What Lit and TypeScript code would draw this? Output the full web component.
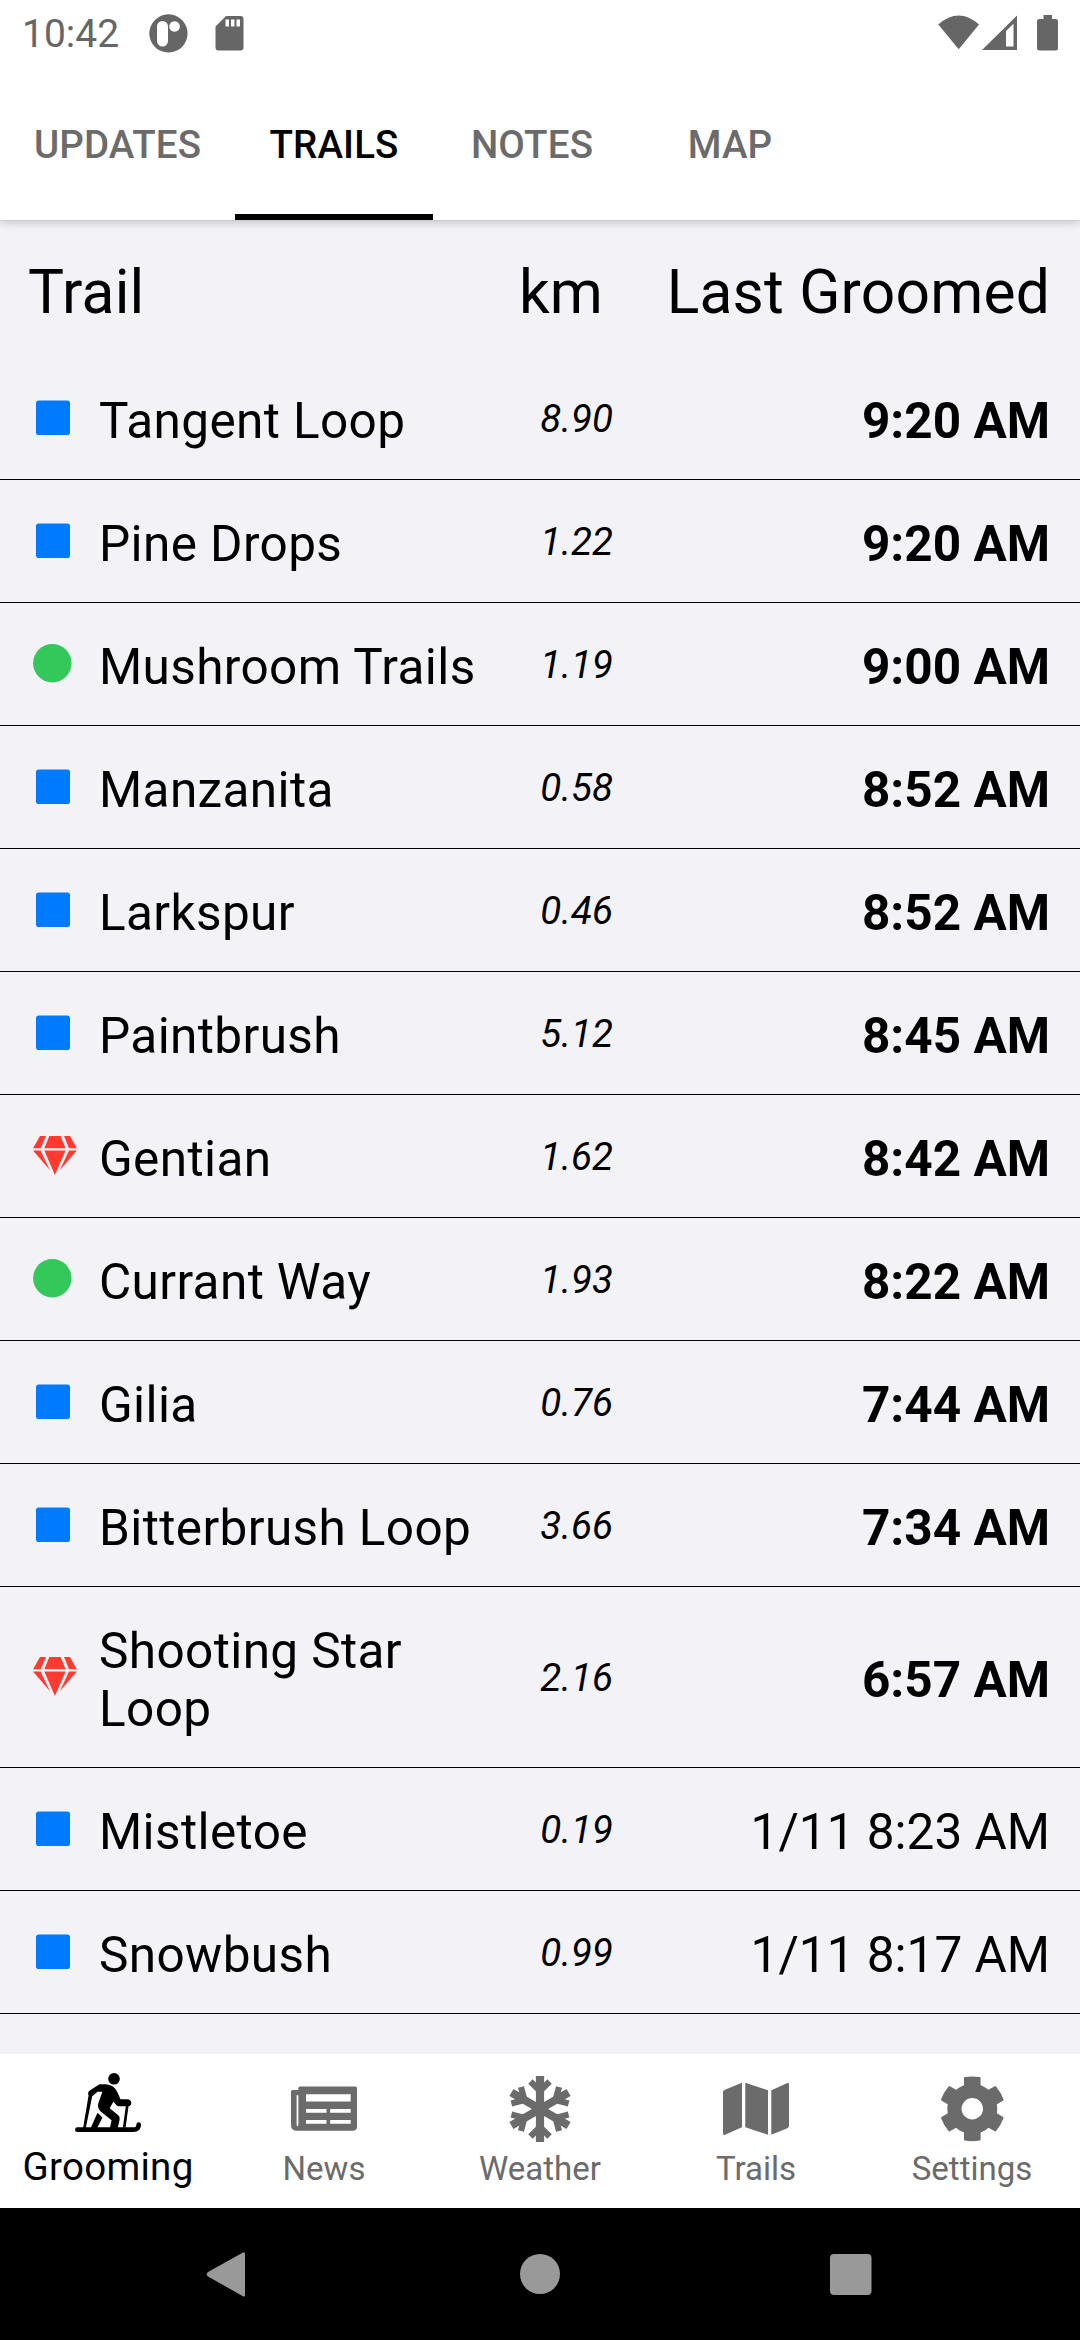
import { LitElement, html, css, svg } from "lit";
import { customElement, property } from "lit/decorators.js";
import { classMap } from "lit/directives/class-map.js";

type Level = "square" | "circle" | "gem";
interface Trail { name: string; km: string; time: string; level: Level; today: boolean; }

const t = (level: Level, name: string, km: string, time: string, today = true): Trail => ({ level, name, km, time, today });

const TRAILS: Trail[] = [
  t("square", "Tangent Loop", "8.90", "9:20 AM"),
  t("square", "Pine Drops", "1.22", "9:20 AM"),
  t("circle", "Mushroom Trails", "1.19", "9:00 AM"),
  t("square", "Manzanita", "0.58", "8:52 AM"),
  t("square", "Larkspur", "0.46", "8:52 AM"),
  t("square", "Paintbrush", "5.12", "8:45 AM"),
  t("gem", "Gentian", "1.62", "8:42 AM"),
  t("circle", "Currant Way", "1.93", "8:22 AM"),
  t("square", "Gilia", "0.76", "7:44 AM"),
  t("square", "Bitterbrush Loop", "3.66", "7:34 AM"),
  t("gem", "Shooting Star Loop", "2.16", "6:57 AM"),
  t("square", "Mistletoe", "0.19", "1/11 8:23 AM", false),
  t("square", "Snowbush", "0.99", "1/11 8:17 AM", false),
];

const LEVEL_ICONS = {
  square: svg`<rect x="3" y="2.5" width="34" height="34.5" rx="2.8" fill="#007aff"/>`,
  circle: svg`<circle cx="19.3" cy="19.2" r="19.2" fill="#34c759"/>`,
  gem: svg`<path fill="#ff3b30" d="M7 0H13L7.7 12.3H0ZM16.3 0H27.6L32.6 12.3H11.3ZM31 0H37L43.8 12.3H36ZM0 14.6H7.5L17 34.3ZM11.3 14.6H32.6L21.9 39ZM36 14.6H43.8L26.8 34.3Z"/>`,
};

const NAV_ICONS = {
  skier: svg`<g transform="translate(0 -2)">
    <circle cx="39" cy="4.8" r="5.8"/>
    <path d="M24.5 10.3C32 10 39 10 42.5 18.500L45.500 25.200H52C57.500 25.200 57.500 31.800 53.500 32.300L50.600 53.500H47.900L50.800 32.300H44.500C41.500 32.300 40.500 30 38.500 27.500L34.700 34.200L43.600 41.500C45 43 44.700 45 44.400 47L42.600 54H34.900L36.600 46.200L26 37.800C22.500 34.500 22.500 31 24 27.300L27.400 17.700L22.500 17.800L17.200 22.200L10.800 54H8.100L13.600 21.300C12.700 20 13 17.500 14.800 16.500Z"/>
    <path d="M22.500 38.700L27.400 43.500L22.200 54H15.700Z"/>
    <path d="M2.400 55.700H58.500C62 55.700 63.500 54.300 63.700 50.600" fill="none" stroke="currentColor" stroke-width="4.700" stroke-linecap="round"/></g>`,
  news: svg`<path transform="translate(0 -2)" fill-rule="evenodd" d="M9 12.500H64.500Q66 12.500 66 14V52.500Q66 56.800 61.500 56.800H6Q0 56.800 0 51V17.500Q0 16 1.500 16H7.300V14.200Q7.300 12.500 9 12.500ZM5.600 21.300V50.500Q5.600 52.200 6.500 52.200T7.400 50.500V21.300ZM15 20.200V27.500H59.700V20.200ZM15 35V38.700H35.500V35ZM39.200 35V38.700H59.700V35ZM15 46V49.700H35.500V46ZM39.200 46V49.700H59.700V46Z"/>`,
  snow: svg`<g transform="translate(33 33)" fill="none" stroke="currentColor" stroke-width="8.200">
      ${[0, 60, 120, 180, 240, 300].map((a) => svg`<g transform="rotate(${a})">
        <path d="M0 0V-33"/><path stroke-width="6.200" d="M-9.600 -27.500L0 -18L9.600 -27.500"/></g>`)}
    </g>`,
  map: svg`<path transform="translate(0 -1.700)" d="M19 8.500V53L2 60.400Q0 61.200 0 59V18Q0 16.200 1.800 15.500ZM22.300 8.500L45 16V60.500L22.300 53ZM48.300 16L64 9Q66 8.200 66 10V51.500Q66 53.200 64.300 54L48.300 60.500Z"/>`,
  gear: svg`<g transform="translate(33.300 32.800)">
      <path fill-rule="evenodd" d="M0 -25A25 25 0 1 1 0 25A25 25 0 1 1 0 -25ZM0 -10.700A10.700 10.700 0 1 0 0 10.700A10.700 10.700 0 1 0 0 -10.700Z"/>
      ${[0, 60, 120, 180, 240, 300].map((a) => svg`<path transform="rotate(${a})" d="M-8.300 -22V-30.700Q-8.300 -31.600 -7.400 -31.700Q0 -33 7.400 -31.700Q8.300 -31.600 8.300 -30.700V-22Z"/>`)}
    </g>`,
};

@customElement("status-bar")
class StatusBar extends LitElement {
  static styles = css`
    :host { display: flex; height: 66px; box-sizing: border-box; padding: 0 21px 0 22px; align-items: center; justify-content: space-between; color: #666; }
    .side { display: flex; align-items: center; }
    .time { font-size: 39px; line-height: 46px; padding-top: 2px; width: 127px; white-space: nowrap; }
    svg { display: block; fill: currentColor; }
  `;
  render() {
    return html`
      <div class="side">
        <span class="time">10:42</span>
        <svg width="110" height="66" viewBox="149 0 110 66">
          <path fill-rule="evenodd" d="M168.500 14.300A19.100 19.100 0 1 1 168.400 14.300ZM157 26.500V41A5.500 5.500 0 0 0 168 41V26.500A5.500 5.500 0 0 0 157 26.500ZM174.500 21.200A5.300 5.300 0 1 0 174.600 21.200Z"/>
          <path fill-rule="evenodd" d="M226 16H240.500Q243.500 16 243.500 19V47.500Q243.500 50.500 240.500 50.500H218.500Q215.500 50.500 215.500 47.500V26.500ZM225.500 19.500V26.500H229V19.500ZM231 19.500V26.500H234.500V19.500ZM236.500 19.500V26.500H240V19.500Z"/>
        </svg>
      </div>
      <svg width="125" height="66" viewBox="934 0 125 66">
        <path d="M938.300 24.500Q958.700 6.500 979 24.500L958.700 49.300Z"/>
        <path fill-rule="evenodd" d="M982 50L1017 15.500V50ZM1006 31V46.500H1013.500V23.700Z"/>
        <path d="M1043.500 15H1052V19H1055.500Q1058 19 1058 21.500V48Q1058 50.500 1055.500 50.500H1039.500Q1037 50.500 1037 48V21.500Q1037 19 1039.500 19H1043.500Z"/>
      </svg>`;
  }
}

@customElement("top-tabs")
class TopTabs extends LitElement {
  static styles = css`
    :host { display: flex; height: 154px; color: #6b6b6b; }
    .tab { width: 198px; box-sizing: border-box; border-bottom: 6px solid transparent; display: flex; align-items: center; justify-content: center; font-size: 38.500px; font-weight: 500; line-height: 46px; padding-top: 10px; letter-spacing: 0.150px; }
    .wide { width: 235px; }
    .active { color: #000; border-bottom-color: #000; }
  `;
  render() {
    return ["UPDATES", "TRAILS", "NOTES", "MAP"].map((label) => html`
      <div class=${classMap({ tab: true, wide: label === "UPDATES", active: label === "TRAILS" })}>${label}</div>`);
  }
}

@customElement("trail-row")
class TrailRow extends LitElement {
  @property({ attribute: false }) trail!: Trail;
  static styles = css`
    :host { display: grid; grid-template-columns: 66px 420px 127px 1fr; align-items: center; box-sizing: border-box; padding: 35px 30px 29px 33px; border-bottom: 1px solid #000; font-size: 49.500px; line-height: 58px; color: #000; }
    .icon { display: block; width: 44px; height: 40px; overflow: visible; margin-bottom: 7px; }
    .name { width: 385px; letter-spacing: 0.380px; }
    .km { font-size: 38.500px; font-style: italic; text-align: right; line-height: 46px; margin-bottom: 4px; padding-right: 33px; }
    .time { text-align: right; white-space: nowrap; }
    .today { font-weight: 700; }
  `;
  render() {
    const { name, km, time, level, today } = this.trail;
    return html`
      <svg class="icon" viewBox="0 0 44 40">${LEVEL_ICONS[level]}</svg>
      <span class="name">${name}</span>
      <span class="km">${km}</span>
      <span class=${classMap({ time: true, today })}>${time}</span>`;
  }
}

@customElement("bottom-nav")
class BottomNav extends LitElement {
  static styles = css`
    :host { display: grid; grid-template-columns: repeat(5, 1fr); height: 154px; background: #fff; color: #6b6b6b; }
    .item { display: flex; flex-direction: column; align-items: center; padding-top: 22px; font-size: 33px; line-height: 40px; }
    svg { display: block; width: 66px; height: 66px; fill: currentColor; overflow: visible; }
    .label { margin-top: 7px; white-space: nowrap; }
    .active { color: #000; font-size: 38.500px; letter-spacing: 0.300px; }
    .active .label { margin-top: 5px; }
  `;
  render() {
    const items = [["Grooming", NAV_ICONS.skier], ["News", NAV_ICONS.news], ["Weather", NAV_ICONS.snow], ["Trails", NAV_ICONS.map], ["Settings", NAV_ICONS.gear]] as const;
    return items.map(([label, icon], i) => html`
      <div class=${classMap({ item: true, active: i === 0 })}>
        <svg viewBox="0 0 66 66">${icon}</svg><span class="label">${label}</span>
      </div>`);
  }
}

@customElement("app-root")
class AppRoot extends LitElement {
  static styles = css`
    :host { display: flex; flex-direction: column; width: 1080px; height: 2340px; overflow: hidden; background: #f2f2f7; font-family: Roboto, "Liberation Sans", sans-serif; }
    .top { background: #fff; flex: none; box-shadow: 0 2px 10px rgba(0, 0, 0, 0.2), 0 0 2px rgba(0, 0, 0, 0.15); }
    .head { display: grid; grid-template-columns: 491px 1fr auto; padding: 37px 30px 29px 28px; font-size: 60.500px; line-height: 71px; letter-spacing: 0.200px; color: #000; }
    .list { flex: 1; }
    .system { flex: none; height: 132px; background: #000; display: block; fill: #999; }
  `;
  render() {
    return html`
      <div class="top"><status-bar></status-bar><top-tabs></top-tabs></div>
      <div class="list">
        <div class="head"><span>Trail</span><span>km</span><span>Last Groomed</span></div>
        ${TRAILS.map((trail) => html`<trail-row .trail=${trail}></trail-row>`)}
      </div>
      <bottom-nav></bottom-nav>
      <svg class="system" width="1080" height="132" viewBox="0 2208 1080 132">
        <path d="M243 2252.500Q245 2251.500 245 2254V2295Q245 2297.500 242.500 2296L208 2276.500Q205.500 2274.500 208 2272Z"/>
        <circle cx="540" cy="2274" r="20"/>
        <rect x="830" y="2254" width="41.500" height="41" rx="4"/>
      </svg>`;
  }
}
